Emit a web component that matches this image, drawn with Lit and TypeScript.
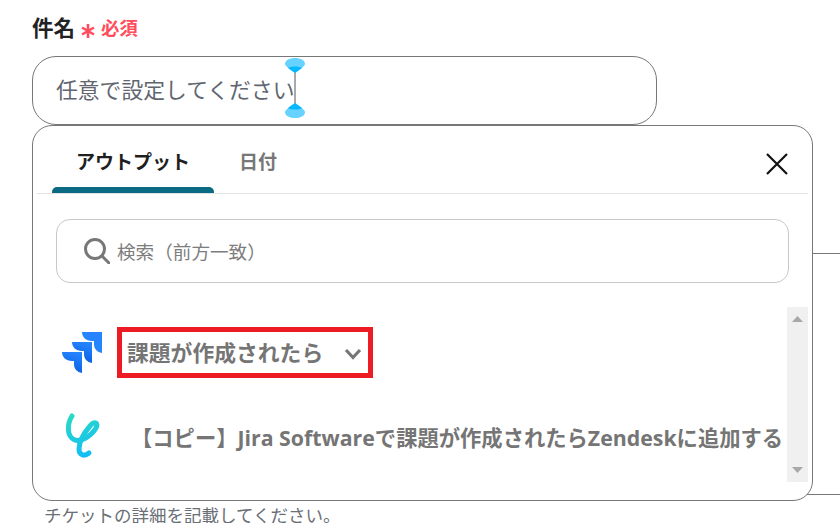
import { LitElement, html, css } from "lit";
import { customElement } from "lit/decorators.js";

@customElement("app-root")
export class AppRoot extends LitElement {
  static styles = css`
    :host {
      display: block;
      position: relative;
      width: 840px;
      height: 523px;
      overflow: hidden;
      background: #fff;
      font-family: "Open Sans", "Noto Sans CJK JP", sans-serif;
      color: #6f6f6f;
    }
    .page { display: flex; flex-direction: column; padding: 13px 0 0 32px; }
    .label { display: flex; align-items: center; height: 30px; font-size: 21.5px; font-weight: 700; color: #222; line-height: 30px; }
    .star { width: 14px; height: 14px; margin: 6px 6px 0 6px; }
    .req { font-size: 18.4px; color: #ff4d5e; font-weight: 700; }
    .input { position: relative; box-sizing: border-box; margin-top: 13px; width: 625px; height: 69px; border: 1px solid #777; border-radius: 24px; padding: 0 0 4px 23px; display: flex; align-items: center; font-size: 21.8px; color: #5f6670; }
    .caret { position: absolute; left: 250px; top: -1px; width: 24px; height: 64px; }
    .back { box-sizing: border-box; margin-top: 128px; margin-left: 700px; height: 242px; width: 200px; border: 1px solid #777; }
    .hint { margin: 12px 0 0 12px; font-size: 17.5px; line-height: 16px; color: #6a6f76; white-space: nowrap; }
    .popup { position: absolute; left: 32px; top: 125px; box-sizing: border-box; width: 781px; height: 376px; background: #fff; border: 1px solid #777; border-radius: 20px; padding: 0 4px; display: flex; flex-direction: column; }
    .tabs { display: flex; height: 67px; flex: none; border-bottom: 1px solid #e2e2e2; position: relative; padding-left: 15px; }
    .tab { position: relative; width: 162px; box-sizing: border-box; height: 67px; display: flex; align-items: center; justify-content: center; font-size: 19px; font-weight: 700; color: #777; padding: 8px 0 6px; }
    .tab.on { color: #1f1f1f; }
    .tab.on::after { content: ""; position: absolute; left: 0; right: 0; bottom: 0; height: 6px; background: #0b6a83; border-radius: 5px 5px 0 0; }
    .tab.off { width: auto; margin-left: 25px; }
    .close { position: absolute; right: 19px; top: 26px; width: 24px; height: 24px; }
    .search { box-sizing: border-box; margin: 25px 19px 0 19px; height: 64px; border: 1px solid #c8c8c8; border-radius: 14px; display: flex; align-items: center; padding-left: 27px; gap: 7px; font-size: 18.6px; color: #7d7d7d; flex: none; }
    .search span { margin-bottom: 2px; }
    .body { position: relative; flex: 1; }
    .scroll { position: absolute; right: 0; top: 24px; width: 21px; height: 175px; background: #f0f0f0; display: flex; flex-direction: column; justify-content: space-between; align-items: center; padding: 9px 0; box-sizing: border-box; }
    .row { display: flex; align-items: center; font-weight: 700; color: #757575; }
    .r1 { margin: 43px 0 0 24px; height: 52px; }
    .r2 { margin: 28px 0 0 27px; height: 58px; }
    .red { box-sizing: border-box; margin-left: 14px; width: 256px; height: 51px; border: 5px solid #ed1c24; display: flex; align-items: center; padding: 0 0 2px 5px; font-size: 21.8px; }
    .chev { width: 18px; height: 12px; margin-left: 21px; margin-top: 6px; }
    .r2 span { margin-left: 31px; font-size: 21.3px; white-space: nowrap; margin-top: 2px; }
  `;

  render() {
    return html`
      <div class="page">
        <div class="label">
          件名
          <svg class="star" viewBox="0 0 14 14" fill="none" stroke="#ff4d5e" stroke-width="2.6">
            <path d="M7 0v14M1 3.5l12 7M13 3.5l-12 7" />
          </svg>
          <span class="req">必須</span>
        </div>
        <div class="input">
          任意で設定してください
          <svg class="caret" viewBox="0 0 24 64">
            <path d="M12 16V48" stroke="#555" stroke-width="1" />
            <path d="M2 8C2 4 7 2 12 2C17 2 22 4 22 8C22 10 15 15 12 17C9 15 2 10 2 8Z" fill="#66d2ff" />
            <path d="M5 12C8 10 16 10 19 12L12 17Z" fill="#05b8ff" />
            <path d="M2 56C2 60 7 62 12 62C17 62 22 60 22 56C22 54 15 49 12 47C9 49 2 54 2 56Z" fill="#66d2ff" />
            <path d="M5 52C8 54 16 54 19 52L12 47Z" fill="#05b8ff" />
          </svg>
        </div>
        <div class="back"></div>
        <div class="hint">チケットの詳細を記載してください。</div>
      </div>
      <div class="popup">
        <div class="tabs">
          <div class="tab on">アウトプット</div>
          <div class="tab off">日付</div>
          <svg class="close" viewBox="0 0 24 24" stroke="#111" stroke-width="2.2" fill="none">
            <path d="M2 2L22 22M22 2L2 22" />
          </svg>
        </div>
        <div class="search">
          <svg width="26" height="26" viewBox="0 0 26 26" fill="none" stroke="#777" stroke-width="3">
            <circle cx="11" cy="11" r="9.5" />
            <path d="M18 18L25 25" stroke-linecap="round" />
          </svg>
          <span>検索（前方一致）</span>
        </div>
        <div class="body">
          <div class="scroll">
            <svg width="11" height="6" viewBox="0 0 11 6"><path d="M5.5 0L11 6H0Z" fill="#a8a8a8" /></svg>
            <svg width="11" height="6" viewBox="0 0 11 6"><path d="M0 0H11L5.5 6Z" fill="#a8a8a8" /></svg>
          </div>
          <div class="row r1">
            <svg width="42" height="42" viewBox="0 0 42 42">
              <defs>
                <linearGradient id="j" x1="0.6" y1="1" x2="0.9" y2="0.1">
                  <stop offset="0" stop-color="#0a60e0" />
                  <stop offset="1" stop-color="#2684ff" />
                </linearGradient>
              </defs>
              <path d="M41 1H21C21 6 25 10 31 10H33V13C33 18 36 21 41 22Z" fill="#2684ff" />
              <path d="M31 11H11C11 16 15 20 21 20H23V23C23 28 26 31 31 32Z" fill="url(#j)" />
              <path d="M21 21H1C1 26 5 30 11 30H13V33C13 38 16 41 21 42Z" fill="url(#j)" />
            </svg>
            <div class="red">
              課題が作成されたら
              <svg class="chev" viewBox="0 0 18 12" fill="none" stroke="#777" stroke-width="3.2">
                <path d="M2 2L9 9.5L16 2" />
              </svg>
            </div>
          </div>
          <div class="row r2">
            <svg width="36" height="48" viewBox="0 0 36 48" fill="none" stroke-width="5" stroke-linecap="round">
              <defs>
                <linearGradient id="y" gradientUnits="userSpaceOnUse" x1="4" y1="2" x2="20" y2="46">
                  <stop offset="0" stop-color="#2bdcc0" />
                  <stop offset="1" stop-color="#12bdf8" />
                </linearGradient>
              </defs>
              <path d="M8 5C3 13 3 24 9 28C16 33 28 24 32 17C35 11 30 10 26 15C20 22 15 31 15 38C15 44 20 46 25 42" stroke="url(#y)" />
            </svg>
            <span>【コピー】Jira Softwareで課題が作成されたらZendeskに追加する</span>
          </div>
        </div>
      </div>
    `;
  }
}
